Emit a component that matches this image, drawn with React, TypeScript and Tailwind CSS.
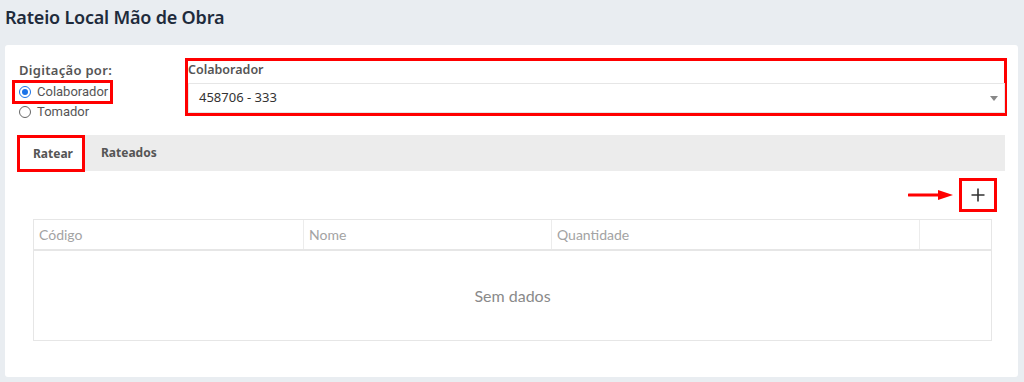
import React from 'react';

export default function App() {
  const cols = [
    { label: 'Código', w: 'w-[270px]' },
    { label: 'Nome', w: 'w-[248px]' },
    { label: 'Quantidade', w: 'w-[368px]' },
    { label: '', w: 'flex-1' },
  ];

  return (
    <div className="h-[382px] bg-[#e9edf1] font-['Noto_Sans',sans-serif] overflow-hidden">
      {/* Title */}
      <div className="h-[45px] pl-[5px] pt-[3px]">
        <h1 className="text-[18px] leading-[28px] font-semibold text-[#1e2b3c] tracking-[-0.2px]">
          Rateio Local Mão de Obra
        </h1>
      </div>

      {/* Card */}
      <div className="ml-[5px] mr-[6px] h-[332px] bg-white rounded-[3px] pt-[13px]">
        <div className="flex h-[58px] items-start">
          {/* Digitação por */}
          <div className="ml-[7px] w-[173px] pt-[2px]">
            <div className="pl-[7px] text-[13px] leading-[20px] font-semibold text-[#555] tracking-[0.3px]">Digitação por:</div>
            <div className="w-[101px] h-[24px] border-[3px] border-[#f00] flex items-center pl-[4px] gap-[6px] text-[13px] text-[#555] font-['Roboto',sans-serif]">
              <span className="shrink-0 w-[12px] h-[12px] rounded-full border border-[#1a73e8] flex items-center justify-center">
                <span className="w-[6px] h-[6px] rounded-full bg-[#1a73e8]" />
              </span>
              Colaborador
            </div>
            <div className="flex items-center pl-[7px] gap-[6px] h-[16px] text-[13px] text-[#555] font-['Roboto',sans-serif]">
              <span className="shrink-0 w-[12px] h-[12px] rounded-full border border-[#666]" />
              Tomador
            </div>
          </div>

          {/* Colaborador */}
          <div className="w-[822px] h-[58px] border-[3px] border-[#f00]">
            <div className="text-[12.5px] leading-[18px] font-semibold text-[#555]">Colaborador</div>
            <div className="mt-[4px] h-[30px] mr-[-1px] border border-[#e6e6e6] flex items-center justify-between pl-[10px] pr-[6px]">
              <span className="text-[13px] text-[#333]">458706 - 333</span>
              <span className="w-0 h-0 border-l-[4px] border-r-[4px] border-t-[5px] border-l-transparent border-r-transparent border-t-[#888]" />
            </div>
          </div>
        </div>

        {/* Tabs */}
        <div className="mt-[19px] ml-[12px] w-[988px] h-[36px] bg-[#ececec] flex items-stretch">
          <div className="w-[68px] h-[37px] bg-white border-[3px] border-[#f00] flex items-center pl-[13px] text-[12px] font-bold text-[#555]">
            Ratear
          </div>
          <div className="flex items-center pl-[16px] text-[12px] font-bold text-[#555]">Rateados</div>
        </div>

        {/* Add button */}
        <div className="mt-[7px] flex items-center justify-end pr-[21px] gap-[5px]">
          <svg width="46" height="12" viewBox="0 0 46 12">
            <line x1="1" y1="6" x2="34" y2="6" stroke="#f00" strokeWidth="3" strokeLinecap="round" />
            <polygon points="30,1 45,6 30,11" fill="#f00" />
          </svg>
          <button className="w-[38px] h-[34px] border-[3px] border-[#f00] bg-white flex items-center justify-center">
            <svg width="14" height="14" viewBox="0 0 14 14">
              <path d="M7 0.5v13M0.5 7h13" stroke="#333" strokeWidth="1.6" />
            </svg>
          </button>
        </div>

        {/* Table */}
        <div className="mt-[7px] ml-[28px] w-[959px] border border-[#e6e6e6] font-['Lato',sans-serif]">
          <div className="flex h-[31px] border-b-2 border-[#e6e6e6]">
            {cols.map((c, i) => (
              <div
                key={i}
                className={`${c.w} ${i < cols.length - 1 ? 'border-r border-[#ececec]' : ''} flex items-center pl-[5px] text-[14px] text-[#a3a3a3]`}
              >
                {c.label}
              </div>
            ))}
          </div>
          <div className="h-[89px] flex items-center justify-center text-[16px] text-[#8a8a8a]">
            Sem dados
          </div>
        </div>
      </div>
    </div>
  );
}
